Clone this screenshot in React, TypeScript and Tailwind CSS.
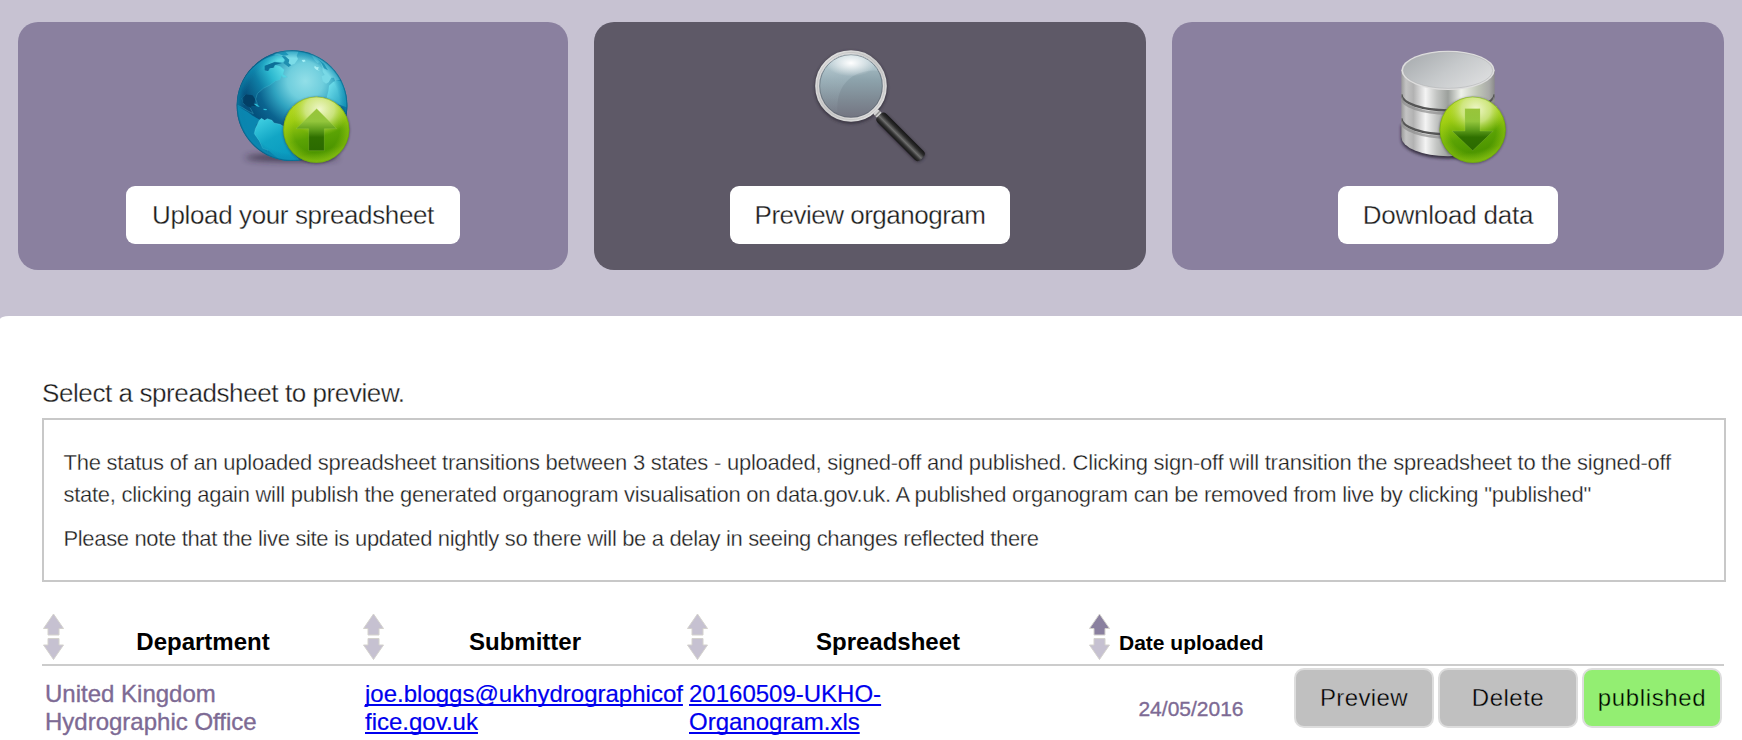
import React from "react";

type BallProps = { cx: number; id: string; direction: "up" | "down" };

function GreenBall({ cx, id, direction }: BallProps) {
  const arrow =
    direction === "up"
      ? "M1,-63 L61,-3 H24 V63 H-23 V-3 H-61 Z"
      : "M-23,-63 H22 V4 H62 L0,63 L-62,4 H-23 Z";
  return (
    <g transform={`translate(${cx} 284)`}>
      <defs>
        <linearGradient id={`${id}-base`} x1="0.35" y1="0" x2="0.6" y2="1">
          <stop offset="0" stopColor="#c4de2e" />
          <stop offset="0.3" stopColor="#9ccb12" />
          <stop offset="0.6" stopColor="#5ba304" />
          <stop offset="0.82" stopColor="#4d9600" />
          <stop offset="1" stopColor="#62a80c" />
        </linearGradient>
        <radialGradient id={`${id}-edge`} cx="0.5" cy="0.5" r="0.5">
          <stop offset="0.7" stopColor="#a8d414" stopOpacity="0" />
          <stop offset="1" stopColor="#a8d414" stopOpacity="0.5" />
        </radialGradient>
        <radialGradient id={`${id}-shine`} cx="0.5" cy="0.4" r="0.5">
          <stop offset="0" stopColor="#f0f7cc" />
          <stop offset="0.5" stopColor="#d6ea94" stopOpacity="0.8" />
          <stop offset="1" stopColor="#a8d326" stopOpacity="0" />
        </radialGradient>
        <linearGradient id={`${id}-arrow`} x1="0" y1="0" x2="0" y2="1">
          <stop offset="0" stopColor="#98c43a" />
          <stop offset="0.3" stopColor="#93c63c" />
          <stop offset="0.5" stopColor="#5f9e1c" />
          <stop offset="0.68" stopColor="#2f7000" />
          <stop offset="1" stopColor="#2b6a00" />
        </linearGradient>
        <filter id={`${id}-blur`} x="-20%" y="-20%" width="140%" height="140%">
          <feGaussianBlur stdDeviation="3" />
        </filter>
        <clipPath id={`${id}-clip`}>
          <circle r="99" />
        </clipPath>
      </defs>
      <circle r="100" cy="2" fill="#2f2a3a" opacity="0.55" filter={`url(#${id}-blur)`} />
      <circle r="99" fill={`url(#${id}-base)`} />
      <circle r="99" fill={`url(#${id}-edge)`} />
      <g clipPath={`url(#${id}-clip)`}>
        <ellipse cx="10" cy="-45" rx="88" ry="80" fill={`url(#${id}-shine)`} />
      </g>
      <circle r="98" fill="none" stroke="#5d9a14" strokeOpacity="0.5" strokeWidth="2.5" />
      <path d={arrow} fill={`url(#${id}-arrow)`} stroke="#a9d450" strokeOpacity="0.4" strokeWidth="2" />
    </g>
  );
}

function GlobeIcon() {
  return (
    <svg width="150" height="140" viewBox="-6 0 450 420" aria-hidden="true">
      <defs>
        <radialGradient id="sea" gradientUnits="userSpaceOnUse" cx="256" cy="138" r="215">
          <stop offset="0" stopColor="#92dfe8" />
          <stop offset="0.25" stopColor="#6fcedd" />
          <stop offset="0.45" stopColor="#2fa3c0" />
          <stop offset="0.66" stopColor="#0b6490" />
          <stop offset="0.85" stopColor="#04507c" />
          <stop offset="1" stopColor="#0879a4" />
        </radialGradient>
        <radialGradient id="rim" gradientUnits="userSpaceOnUse" cx="216" cy="212" r="166">
          <stop offset="0.86" stopColor="#0b7ea8" stopOpacity="0" />
          <stop offset="0.97" stopColor="#0b88b0" stopOpacity="0.55" />
          <stop offset="1" stopColor="#07587f" />
        </radialGradient>
        <linearGradient id="north" gradientUnits="userSpaceOnUse" x1="64" y1="160" x2="186" y2="96">
          <stop offset="0" stopColor="#064f7c" />
          <stop offset="0.4" stopColor="#0f7fa6" />
          <stop offset="0.7" stopColor="#2cb8cf" />
          <stop offset="1" stopColor="#5cdbe6" />
        </linearGradient>
        <linearGradient id="south" gradientUnits="userSpaceOnUse" x1="120" y1="250" x2="190" y2="372">
          <stop offset="0" stopColor="#3fcfe2" />
          <stop offset="0.5" stopColor="#12a6c5" />
          <stop offset="1" stopColor="#0a9bbf" />
        </linearGradient>
        <linearGradient id="africa" x1="0" y1="0" x2="1" y2="0.7">
          <stop offset="0" stopColor="#7ce8f2" />
          <stop offset="1" stopColor="#1a9abb" />
        </linearGradient>
        <filter id="soft" x="-20%" y="-100%" width="140%" height="300%">
          <feGaussianBlur stdDeviation="9" />
        </filter>
        <clipPath id="globe-clip">
          <circle cx="216" cy="212" r="166" />
        </clipPath>
      </defs>
      <ellipse cx="215" cy="368" rx="140" ry="11" fill="#2a2336" opacity="0.75" filter="url(#soft)" />
      <circle cx="216" cy="212" r="166" fill="url(#sea)" />
      <g clipPath="url(#globe-clip)">
        <path
          d="M50,210 Q55,130 110,90 Q130,72 150,66 L166,60 L184,62 L194,74 L190,82 L176,82 L164,80 L150,86 L138,92 L134,106 L146,108 L150,100 L162,98 L166,90 L180,94 L193,104 L189,118 L202,126 L190,128 L184,122 L180,134 L166,138 L150,150 L130,160 L112,176 L107,192 L112,206 L104,207 L97,182 L76,180 L66,190 L70,206 L88,214 L100,236 L84,228 Q64,214 50,210 Z"
          fill="url(#north)"
          stroke="#4fc6da"
          strokeOpacity="0.45"
          strokeWidth="2"
        />
        <path d="M67,188 L78,178 L98,181 L105,192 L104,207 L112,214 L95,212 L92,218 L80,213 L68,203 Z" fill="#033f66" />
        <path d="M134,92 L164,82 L186,84 L164,90 L160,98 L148,100 L144,108 L134,106 Z" fill="#0b6f98" />
        <path d="M52,212 Q66,222 84,232 L98,242 L122,256 L108,270 L104,296 L122,330 L150,362 Q70,330 52,212 Z" fill="#0a86b0" />
        <path d="M196,62 L208,74 L206,84 L214,90 L206,96 L190,84 L196,76 L186,62 Z" fill="#1f8fb0" />
        <path d="M160,58 Q178,48 200,46 L236,49 L230,62 L234,72 L224,86 L214,90 L206,84 L208,74 L196,64 L176,62 Z" fill="#7bdce8" />
        <path d="M172,54 L196,50 L206,60 L190,62 Z" fill="#2a9fbd" />
        <path d="M245,75 L254,74 L257,79 L249,82 Z" fill="#a5f0f6" />
        <path d="M284,92 L290,97 L296,96 L294,104 L300,108 L289,104 L283,98 Z" fill="#a9f0f5" />
        <path
          d="M273,58 Q300,64 334,96 Q352,112 362,134 L345,138 L342,128 L334,128 L326,142 L318,146 L308,138 L305,124 L314,120 L308,110 L307,96 L300,82 L292,84 L284,76 Z"
          fill="#79d9e6"
        />
        <path d="M290,70 L312,86 L324,106 L312,100 L304,84 Z" fill="#2d9ebb" />
        <path d="M348,137 L340,140 L327,152 L325,168 L320,188 L345,205 L390,220 Q388,170 366,138 Z" fill="url(#africa)" />
        <path d="M101,206 L112,208 L119,216 L110,214 Z M130,221 L141,222 L139,226 L131,225 Z" fill="#2cbdd8" />
        <path
          d="M118,256 L124,250 L134,256 L142,251 L156,256 L162,264 L180,268 L194,276 L200,330 L240,380 L180,380 L146,372 L144,346 L128,340 L118,318 L103,296 L106,282 L110,272 Z"
          fill="url(#south)"
          stroke="#5fdcea"
          strokeOpacity="0.5"
          strokeWidth="2"
        />
        <path d="M144,346 L176,372 L160,380 L140,366 Z" fill="#0a7fa8" />
      </g>
      <circle cx="216" cy="212" r="166" fill="url(#rim)" />
      <GreenBall cx={289} id="ball-up" direction="up" />
    </svg>
  );
}

function MagnifierIcon() {
  return (
    <svg width="150" height="140" viewBox="-15 0 450 420" aria-hidden="true">
      <defs>
        <linearGradient id="ring" x1="0" y1="0" x2="1" y2="1">
          <stop offset="0" stopColor="#e4e4e4" />
          <stop offset="0.5" stopColor="#cccccc" />
          <stop offset="1" stopColor="#e4e4e4" />
        </linearGradient>
        <linearGradient id="glass" x1="0" y1="0" x2="0" y2="1">
          <stop offset="0" stopColor="#b5cbd2" />
          <stop offset="0.4" stopColor="#8da3ac" />
          <stop offset="0.7" stopColor="#7f8b95" />
          <stop offset="1" stopColor="#737481" />
        </linearGradient>
        <linearGradient id="sheen" gradientUnits="userSpaceOnUse" x1="0" y1="57" x2="0" y2="235">
          <stop offset="0" stopColor="#cfe0e6" stopOpacity="0.5" />
          <stop offset="0.5" stopColor="#b4c8d0" stopOpacity="0.3" />
          <stop offset="1" stopColor="#9fb0bb" stopOpacity="0.05" />
        </linearGradient>
        <radialGradient id="glint" cx="0.5" cy="0.5" r="0.5">
          <stop offset="0" stopColor="#ffffff" />
          <stop offset="1" stopColor="#ffffff" stopOpacity="0" />
        </radialGradient>
        <linearGradient id="grip" x1="0" y1="0" x2="0" y2="1">
          <stop offset="0" stopColor="#151515" />
          <stop offset="0.25" stopColor="#2c2c2c" />
          <stop offset="0.55" stopColor="#6e6e6e" />
          <stop offset="0.75" stopColor="#333333" />
          <stop offset="1" stopColor="#161616" />
        </linearGradient>
        <filter id="lens-shadow" x="-20%" y="-20%" width="140%" height="140%">
          <feGaussianBlur stdDeviation="5" />
        </filter>
        <clipPath id="lens-clip">
          <circle cx="153" cy="153" r="96" />
        </clipPath>
      </defs>
      <circle cx="153" cy="157" r="104" fill="none" stroke="#26222e" strokeWidth="10" opacity="0.7" filter="url(#lens-shadow)" />
      <g transform="translate(238 242) rotate(45)">
        <rect x="6" y="-18" width="178" height="38" rx="14" fill="#26222e" opacity="0.8" filter="url(#lens-shadow)" />
      </g>
      <circle cx="153" cy="153" r="96" fill="url(#glass)" />
      <g clipPath="url(#lens-clip)">
        <path d="M40,40 H260 V110 Q200,98 158,124 Q108,158 112,230 L40,260 Z" fill="url(#sheen)" />
        <ellipse cx="153" cy="84" rx="76" ry="40" fill="url(#glint)" />
      </g>
      <circle cx="153" cy="153" r="94" fill="none" stroke="#56606a" strokeWidth="3" opacity="0.6" />
      <circle cx="153" cy="153" r="101.5" fill="none" stroke="url(#ring)" strokeWidth="12" />
      <circle cx="153" cy="153" r="101" fill="none" stroke="#999999" strokeWidth="1.5" opacity="0.6" />
      <g transform="translate(232 235) rotate(45)">
        <rect x="-8" y="-10" width="24" height="20" rx="3" fill="#d4d4d4" />
        <rect x="-1" y="-10" width="4" height="20" fill="#8b8b8b" />
        <rect x="8" y="-18" width="182" height="37" rx="12" fill="url(#grip)" />
      </g>
    </svg>
  );
}

function DatabaseIcon() {
  return (
    <svg width="150" height="140" viewBox="-21 0 450 420" aria-hidden="true">
      <defs>
        <linearGradient id="metal" x1="0" y1="0" x2="1" y2="0">
          <stop offset="0" stopColor="#9a9a9a" />
          <stop offset="0.05" stopColor="#c4c4c4" />
          <stop offset="0.13" stopColor="#b2b2b2" />
          <stop offset="0.26" stopColor="#f4f4f4" />
          <stop offset="0.38" stopColor="#c2c4c2" />
          <stop offset="0.5" stopColor="#9ca09c" />
          <stop offset="0.64" stopColor="#eef1ea" />
          <stop offset="0.82" stopColor="#c0c6b8" />
          <stop offset="0.94" stopColor="#a9aaa8" />
          <stop offset="1" stopColor="#8a8a8a" />
        </linearGradient>
        <linearGradient id="lid" x1="0" y1="0.2" x2="1" y2="0.8">
          <stop offset="0" stopColor="#a9adb0" />
          <stop offset="0.5" stopColor="#c6c9cb" />
          <stop offset="1" stopColor="#dedfe0" />
        </linearGradient>
        <filter id="db-shadow" x="-20%" y="-20%" width="140%" height="140%">
          <feGaussianBlur stdDeviation="5" />
        </filter>
        <filter id="seam" x="-10%" y="-30%" width="120%" height="160%">
          <feGaussianBlur stdDeviation="2.2" />
        </filter>
        <clipPath id="db-clip">
          <path d="M64,107 V305 A140,59 0 0 0 344,305 V107 Z" />
        </clipPath>
      </defs>
      <path d="M63,270 V312 A141,59 0 0 0 345,312 V270 Z" fill="#221c2c" opacity="0.8" filter="url(#db-shadow)" />
      <path d="M64,107 V305 A140,59 0 0 0 344,305 V107 Z" fill="url(#metal)" />
      <g fill="none" clipPath="url(#db-clip)">
        <path d="M64,178 A140,48 0 0 0 344,178" stroke="#555555" strokeWidth="7" filter="url(#seam)" />
        <path d="M64,187 A140,48 0 0 0 344,187" stroke="#8d8d8d" strokeWidth="8" strokeOpacity="0.7" filter="url(#seam)" />
        <path d="M64,250 A140,48 0 0 0 344,250" stroke="#555555" strokeWidth="7" filter="url(#seam)" />
        <path d="M64,259 A140,48 0 0 0 344,259" stroke="#8d8d8d" strokeWidth="8" strokeOpacity="0.7" filter="url(#seam)" />
      </g>
      <ellipse cx="204" cy="106" rx="140" ry="59" fill="#dedede" />
      <ellipse cx="204" cy="106" rx="134" ry="54" fill="url(#lid)" stroke="#aaadaf" strokeWidth="1.5" />
      <GreenBall cx={278} id="ball-down" direction="down" />
    </svg>
  );
}

function SortArrows({ active = false }: { active?: boolean }) {
  return (
    <svg className="shrink-0" width="24" height="50" viewBox="0 0 24 50" aria-hidden="true">
      <defs>
        <filter id="sort-soft" x="-20%" y="-20%" width="140%" height="140%">
          <feGaussianBlur stdDeviation="0.5" />
        </filter>
      </defs>
      <g filter="url(#sort-soft)" stroke="#d4d2cd" strokeWidth="1">
        <path d="M11.5,2 L21.5,16.5 H17 V23 H6 V16.5 H1.5 Z" fill={active ? "#8a809f" : "#c6c1d1"} />
        <path d="M11.5,47.5 L21.5,33 H17 V26.5 H6 V33 H1.5 Z" fill="#c6c1d1" />
      </g>
    </svg>
  );
}

const thin = "[-webkit-text-stroke:0.3px_white]";

type CardProps = { className: string; icon: React.ReactNode; button: string; label: string };

function Card({ className, icon, button, label }: CardProps) {
  return (
    <div className={`flex h-[248px] flex-col items-center rounded-[20px] pt-[13px] ${className}`}>
      {icon}
      <button className={`mt-[11px] h-[58px] rounded-[9px] bg-white text-center text-[26px] leading-[58px] text-[#1c1c1c] ${thin} ${button}`}>
        {label}
      </button>
    </div>
  );
}

export default function App() {
  return (
    <div className="h-[740px] w-[1742px] overflow-hidden bg-[#c7c2d2] font-['Liberation_Sans',Arial,sans-serif]">
      <div className="flex gap-[26px] pt-[22px] pl-[18px]">
        <Card className="w-[550px] bg-[#8a809f]" icon={<GlobeIcon />} button="w-[334px] tracking-[-0.38px]" label="Upload your spreadsheet" />
        <Card className="w-[552px] bg-[#5e5967]" icon={<MagnifierIcon />} button="w-[280px] tracking-[-0.5px]" label="Preview organogram" />
        <Card className="w-[552px] bg-[#8a809f]" icon={<DatabaseIcon />} button="w-[220px] tracking-[-0.22px]" label="Download data" />
      </div>

      <main className="mt-[46px] h-[424px] rounded-tl-[9px_3px] bg-white pt-[61px] pl-[42px]">
        <h1 className={`text-[26px] leading-8 tracking-[-0.41px] text-[#1c1c1c] ${thin}`}>Select a spreadsheet to preview.</h1>

        <section className={`mt-[9px] w-[1684px] border-2 border-[#c8c8c8] px-[19.5px] pt-[27px] pb-[25px] text-[22px] leading-8 whitespace-nowrap text-[#1c1c1c] ${thin}`}>
          <p>
            <span className="tracking-[-0.24px]">
              The status of an uploaded spreadsheet transitions between 3 states - uploaded, signed-off and published. Clicking sign-off will transition the spreadsheet to the signed-off
            </span>
            <br />
            <span className="tracking-[-0.277px]">
              state, clicking again will publish the generated organogram visualisation on data.gov.uk. A published organogram can be removed from live by clicking "published"
            </span>
          </p>
          <p className="mt-3 tracking-[-0.347px]">
            Please note that the live site is updated nightly so there will be a delay in seeing changes reflected there
          </p>
        </section>

        <div className="mt-[30px] w-[1682px]">
          <div className="grid h-[54px] grid-cols-[320px_324px_402px_206px_1fr] border-b-2 border-[#cccccc] text-2xl leading-7 font-bold text-black">
            {["Department", "Submitter", "Spreadsheet"].map((name) => (
              <div key={name} className="flex items-start">
                <SortArrows />
                <span className="flex-1 pt-4 pr-[22px] text-center">{name}</span>
              </div>
            ))}
            <div className="flex items-start">
              <SortArrows active />
              <span className="pt-[18px] pl-[7px] text-[21px] leading-[26px] whitespace-nowrap">Date uploaded</span>
            </div>
          </div>

          <div className="grid grid-cols-[320px_324px_402px_206px_1fr] text-2xl leading-7">
            <div className="pt-3.5 pl-[3px] text-[#7d6a94] [-webkit-text-stroke:0.35px_#7d6a94]">
              United Kingdom
              <br />
              Hydrographic Office
            </div>
            <div className="pt-3.5 pl-[3px] [-webkit-text-stroke:0.2px_#0000ee]">
              <a className="text-[#0000ee] underline decoration-2 underline-offset-2 [text-decoration-skip-ink:none]">
                joe.bloggs@ukhydrographicof
                <br />
                fice.gov.uk
              </a>
            </div>
            <div className="pt-3.5 pl-[3px] [-webkit-text-stroke:0.2px_#0000ee]">
              <a className="text-[#0000ee] underline decoration-2 underline-offset-2 [text-decoration-skip-ink:none]">
                20160509-UKHO-
                <br />
                Organogram.xls
              </a>
            </div>
            <div className="pt-[29px] text-center text-[21px] text-[#7d6a94] [-webkit-text-stroke:0.35px_#7d6a94]">24/05/2016</div>
            <div className="flex gap-1 pt-0.5 text-black">
              <button className="h-[60px] w-[140px] rounded-[10px] border-2 border-[#dddddd] bg-[#c0c0c0] tracking-[0.4px] [-webkit-text-stroke:0.35px_#c0c0c0]">
                Preview
              </button>
              <button className="h-[60px] w-[140px] rounded-[10px] border-2 border-[#dddddd] bg-[#c0c0c0] tracking-[0.5px] [-webkit-text-stroke:0.35px_#c0c0c0]">
                Delete
              </button>
              <button className="h-[60px] w-[140px] rounded-[10px] border-2 border-[#dddddd] bg-[#93ee72] tracking-[0.65px] [-webkit-text-stroke:0.35px_#93ee72]">
                published
              </button>
            </div>
          </div>
        </div>
      </main>
    </div>
  );
}
